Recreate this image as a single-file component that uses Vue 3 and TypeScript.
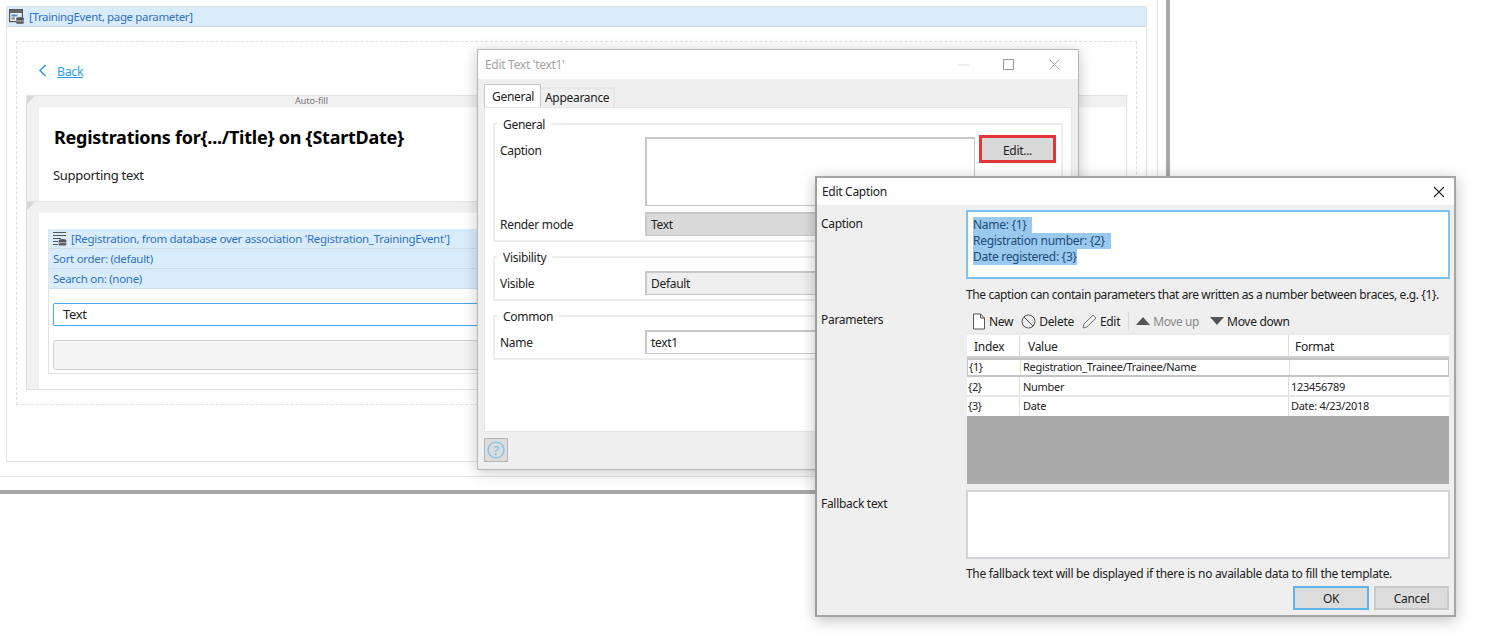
<script setup lang="ts">
interface Param { index: string; value: string; format: string }
const params: Param[] = [
  { index: '{1}', value: 'Registration_Trainee/Trainee/Name', format: '' },
  { index: '{2}', value: 'Number', format: '123456789' },
  { index: '{3}', value: 'Date', format: 'Date: 4/23/2018' },
]
</script>

<template>
  <div class="screen">
    <div class="page">
      <div class="stage">
        <div class="frame">
          <div class="bluebar top">
            <svg class="ic" width="15" height="15" viewBox="0 0 15 15">
              <rect x=".6" y=".6" width="12.8" height="12" fill="#e8eef3" stroke="#555" stroke-width="1.2" />
              <rect x="1" y="1" width="12" height="3" fill="#666" />
              <rect x="2.5" y="5.5" width="6" height="2" fill="#4a90d0" />
              <rect x="2.5" y="8.5" width="3.5" height="2" fill="#888" />
              <ellipse cx="11" cy="9.5" rx="3.8" ry="1.6" fill="#555" />
              <rect x="7.2" y="9.5" width="7.6" height="5.2" rx="1" fill="#555" />
              <path d="M7.2 12h7.6" stroke="#ddd" stroke-width=".8" />
            </svg>
            <span>[TrainingEvent, page parameter]</span>
          </div>
          <div class="dashed">
            <div class="backrow">
              <svg width="9" height="13" viewBox="0 0 9 13"><path d="M7.5 1 2 6.5 7.5 12" fill="none" stroke="#2196f3" stroke-width="1.5" /></svg>
              <a class="back">Back</a>
            </div>
            <div class="layout">
              <div class="strip"><span class="corner"></span><span class="autofill">Auto-fill</span></div>
              <div class="cell hero">
                <div class="title">Registrations for{.../Title} on {StartDate}</div>
                <div class="support">Supporting text</div>
              </div>
              <div class="strip mid"><span class="corner"></span></div>
              <div class="cell lower">
                <div class="listview">
                  <div class="bluebar row first">
                    <svg class="ic2" width="15" height="15" viewBox="0 0 15 15">
                      <path d="M1 1.5h13M1 4.5h13M1 7.5h8M1 10.5h5M1 13.5h5" stroke="#555" stroke-width="1.1" />
                      <ellipse cx="10.5" cy="9.5" rx="3.8" ry="1.5" fill="#555" />
                      <rect x="6.7" y="9.5" width="7.6" height="5" rx="1" fill="#555" />
                      <path d="M6.7 11.8h7.6" stroke="#ddd" stroke-width=".8" />
                    </svg>
                    <span>[Registration, from database over association 'Registration_TrainingEvent']</span>
                  </div>
                  <div class="bluebar row">Sort order: (default)</div>
                  <div class="bluebar row">Search on: (none)</div>
                  <div class="textbox">Text</div>
                  <div class="greybox"></div>
                </div>
              </div>
            </div>
          </div>
        </div>
      </div>
    </div>

    <section class="dlg one">
      <header class="d1-title">
        <span>Edit Text 'text1'</span>
        <svg class="min" width="12" height="2" viewBox="0 0 12 2"><path d="M0 1h12" stroke="#e0e0e0" /></svg>
        <svg class="max" width="11" height="11" viewBox="0 0 11 11"><rect x=".5" y=".5" width="10" height="10" fill="none" stroke="#999" /></svg>
        <svg class="cls" width="11" height="11" viewBox="0 0 11 11"><path d="M.5.5l10 10M10.5.5l-10 10" stroke="#aaa" fill="none" /></svg>
      </header>
      <div class="tabs">
        <span class="tab active">General</span>
        <span class="tab">Appearance</span>
      </div>
      <div class="panel">
        <div class="group g1">
          <span class="legend">General</span>
          <div class="frow">
            <label class="lbl caplbl">Caption</label>
            <div class="capwrap">
              <div class="field cap"></div>
              <button class="editbtn">Edit...</button>
            </div>
          </div>
          <div class="frow gap">
            <label class="lbl">Render mode</label>
            <div class="field sel dark">Text</div>
          </div>
        </div>
        <div class="group">
          <span class="legend">Visibility</span>
          <div class="frow">
            <label class="lbl">Visible</label>
            <div class="field sel">Default</div>
          </div>
        </div>
        <div class="group">
          <span class="legend">Common</span>
          <div class="frow">
            <label class="lbl">Name</label>
            <div class="field sel white">text1</div>
          </div>
        </div>
      </div>
      <div class="d1-foot">
        <button class="help">
          <svg width="20" height="20" viewBox="0 0 20 20">
            <circle cx="10" cy="10" r="8" fill="none" stroke="#6fbdf3" stroke-width="1.2" />
            <text x="10" y="14.5" text-anchor="middle" font-size="13" fill="#6fbdf3" font-family="Noto Sans, sans-serif">?</text>
          </svg>
        </button>
      </div>
    </section>

    <section class="dlg two">
      <header class="d2-title">
        <span>Edit Caption</span>
        <svg width="12" height="12" viewBox="0 0 12 12"><path d="M1 1l10 10M11 1 1 11" stroke="#222" fill="none" stroke-width="1.1" /></svg>
      </header>
      <div class="d2-body">
        <div class="d2row">
          <label class="lbl2 clabel">Caption</label>
          <div class="captext">
            <div class="line"><span class="hl tail">Name: {1}</span></div>
            <div class="line"><span class="hl tail">Registration number: {2}</span></div>
            <div class="line"><span class="hl">Date registered: {3}</span></div>
          </div>
        </div>
        <div class="d2row hint1">
          <span></span>
          <div class="hint tight">The caption can contain parameters that are written as a number between braces, e.g. {1}.</div>
        </div>
        <div class="d2row params">
          <label class="lbl2 plabel">Parameters</label>
          <div>
            <div class="toolbar">
              <span class="tool">
                <svg width="14" height="17" viewBox="0 0 14 17"><path d="M1.5 1h7l4 4v11h-11zM8.5 1v4h4" fill="#fff" stroke="#555" /></svg>New
              </span>
              <span class="tool">
                <svg width="15" height="15" viewBox="0 0 15 15"><circle cx="7.5" cy="7.5" r="6.5" fill="none" stroke="#555" /><path d="M3 3l9 9" stroke="#555" /></svg>Delete
              </span>
              <span class="tool">
                <svg width="15" height="15" viewBox="0 0 15 15"><path d="M1 14l1-4L11 1l3 3-9 9z" fill="none" stroke="#777" /></svg>Edit
              </span>
              <span class="sep"></span>
              <span class="tool off">
                <svg width="14" height="8" viewBox="0 0 14 8"><path d="M7 0l7 8H0z" fill="#555" /></svg>Move up
              </span>
              <span class="tool down">
                <svg width="14" height="8" viewBox="0 0 14 8"><path d="M0 0h14L7 8z" fill="#555" /></svg>Move down
              </span>
            </div>
            <div class="grid">
              <div class="tr head">
                <div class="td">Index</div>
                <div class="td">Value</div>
                <div class="td">Format</div>
              </div>
              <div v-for="(p, i) in params" :key="p.index" class="tr body" :class="{ picked: i === 0 }">
                <div class="td">{{ p.index }}</div>
                <div class="td">{{ p.value }}</div>
                <div class="td">{{ p.format }}</div>
              </div>
              <div class="empty"></div>
            </div>
          </div>
        </div>
        <div class="d2row fallback">
          <label class="lbl2 flabel">Fallback text</label>
          <div class="fallbox"></div>
        </div>
        <div class="d2row hint2">
          <span></span>
          <div class="hint">The fallback text will be displayed if there is no available data to fill the template.</div>
        </div>
        <div class="actions">
          <button class="btn ok">OK</button>
          <button class="btn">Cancel</button>
        </div>
      </div>
    </section>
  </div>
</template>

<style scoped>
.screen {
  position: relative;
  width: 1491px;
  height: 639px;
  overflow: hidden;
  background: #fff;
  font-family: "Noto Sans", "Open Sans", sans-serif;
  font-size: 12px;
  letter-spacing: -0.3px;
  color: #222;
}
.page {
  width: 1170px;
  height: 494px;
  box-sizing: border-box;
  border-right: 4px solid #a8a8a8;
  border-bottom: 4px solid #a8a8a8;
}
.stage {
  width: 1158px;
  height: 477px;
  box-sizing: border-box;
  border-right: 1px solid #e4e4e4;
  border-bottom: 1px solid #e4e4e4;
  padding: 6px 0 0 6px;
}
.frame {
  width: 1141px;
  height: 456px;
  box-sizing: border-box;
  border: 1px solid #e3e3e3;
  border-top: 0;
}
.bluebar {
  display: flex;
  align-items: center;
  background: #d9ecfb;
  color: #2f72c4;
  font-size: 11.5px;
  border-bottom: 1px solid #cfdbe5;
  box-sizing: border-box;
}
.top {
  height: 21px;
  padding-left: 2px;
  gap: 5px;
  border-top: 1px solid #dde5ea;
  letter-spacing: -0.36px;
}
.dashed {
  margin: 14px 9px 0;
  height: 364px;
  box-sizing: border-box;
  border: 1px dashed #dedede;
  padding: 0 9px;
}
.backrow {
  height: 53px;
  box-sizing: border-box;
  padding: 15px 0 0 12px;
  display: flex;
  align-items: flex-start;
  gap: 10px;
}
.backrow svg { margin-top: 7px; }
.back {
  color: #2b9cf5;
  text-decoration: underline;
  font-size: 12.3px;
  margin-top: 6px;
}
.layout {
  width: 1101px;
  height: 295px;
  box-sizing: border-box;
  border: 1px solid #e2e2e2;
  background: #f1f1f1;
}
.strip {
  position: relative;
  height: 11px;
  background: #f1f1f1;
  padding-left: 268px;
}
.strip.mid {
  border-top: 1px solid #e4e4e4;
}
.corner {
  position: absolute;
  left: 0;
  top: 0;
  border-top: 8px solid #d8d8d8;
  border-right: 8px solid transparent;
}
.autofill {
  display: block;
  font-size: 9px;
  line-height: 9px;
  color: #777;
  letter-spacing: 0;
}
.cell {
  margin-left: 12px;
  background: #fff;
}
.hero {
  height: 94px;
  box-sizing: border-box;
  padding: 18px 0 0 15px;
}
.title {
  font-size: 18px;
  font-weight: 700;
  line-height: 25px;
  color: #000;
  letter-spacing: -0.25px;
}
.support {
  margin-top: 16px;
  margin-left: -1px;
  font-size: 13px;
  line-height: 18px;
  color: #222;
}
.lower {
  height: 176px;
  box-sizing: border-box;
  padding: 16px 8px 0 9px;
}
.listview {
  height: 145px;
  box-sizing: border-box;
  border: 1px solid #e2e2e2;
  border-top: 0;
}
.row {
  height: 20px;
  padding-left: 3px;
}
.row:not(.first) { padding-left: 4px; }
.first { gap: 4px; }
.textbox {
  margin: 14px 4px 0;
  height: 23px;
  box-sizing: border-box;
  border: 1px solid #4aa8ec;
  box-shadow: 0 0 1px #7cc3f0;
  border-radius: 2px;
  padding-left: 9px;
  font-size: 13px;
  line-height: 21px;
  color: #222;
}
.greybox {
  margin: 14px 4px 0;
  height: 30px;
  box-sizing: border-box;
  border: 1px solid #d0d0d0;
  border-radius: 3px;
  background: #f4f4f4;
}

.dlg {
  position: absolute;
  box-sizing: border-box;
  background: #efefef;
}
.one {
  left: 477px;
  top: 49px;
  width: 602px;
  height: 421px;
  border: 1px solid #b8b8b8;
  box-shadow: 0 2px 14px rgba(0, 0, 0, 0.22);
}
.d1-title {
  position: relative;
  height: 29px;
  background: #fff;
  padding-left: 7px;
  line-height: 30px;
  color: #a4a4a4;
}
.d1-title svg { position: absolute; }
.min { left: 479px; top: 14px; }
.max { left: 525px; top: 9px; }
.cls { left: 571px; top: 9px; }
.tabs {
  display: flex;
  align-items: flex-end;
  height: 28px;
  padding-left: 6px;
}
.tab {
  height: 20px;
  box-sizing: border-box;
  padding: 0 4px;
  line-height: 18px;
  background: #f0f0f0;
  border: 2px solid #e6e6e6;
  border-bottom: 0;
  border-left: 0;
}
.tab.active {
  height: 23px;
  width: 57px;
  background: #fff;
  border: 1px solid #c9c9c9;
  border-bottom: 0;
  padding-left: 7px;
  line-height: 23px;
}
.panel {
  margin-left: 6px;
  width: 588px;
  height: 325px;
  box-sizing: border-box;
  background: #fff;
  border: 1px solid #e6e6e6;
  padding: 15px 8px 0;
}
.group {
  position: relative;
  border: 2px solid #ededed;
  padding: 13px 5px 4px 5px;
  margin-bottom: 14px;
}
.g1 { padding-top: 12px; }
.legend {
  position: absolute;
  left: 2px;
  top: -8px;
  padding: 0 6px;
  background: #fff;
  line-height: 16px;
}
.frow {
  display: grid;
  grid-template-columns: 145px 1fr;
}
.frow.gap { margin-top: 6px; }
.lbl {
  height: 24px;
  line-height: 26px;
}
.caplbl { line-height: 28px; }
.capwrap {
  display: flex;
  gap: 4px;
  align-items: flex-start;
}
.field {
  box-sizing: border-box;
  border: 1px solid #c8c8cc;
  border-top-width: 2px;
  border-left-width: 2px;
}
.cap {
  width: 330px;
  height: 69px;
  background: #fff;
}
.editbtn {
  width: 77px;
  height: 28px;
  margin-top: -2px;
  box-sizing: border-box;
  border: 3px solid #e1373a;
  background: #d9d9d9;
  font: inherit;
  letter-spacing: inherit;
  color: #222;
  padding: 2px 0 0;
}
.sel {
  height: 24px;
  line-height: 22px;
  padding-left: 4px;
  background: #efefef;
}
.sel.dark { background: #dadada; }
.sel.white { background: #fff; }
.d1-foot {
  padding: 6px 0 0 6px;
}
.help {
  display: block;
  width: 24px;
  height: 24px;
  padding: 0;
  box-sizing: border-box;
  background: #dcdcdc;
  border: 1px solid #b5b5b5;
}
.help svg { display: block; margin: 1px; }

.two {
  left: 815px;
  top: 176px;
  width: 641px;
  height: 441px;
  border: 2px solid #a6a6a6;
  border-left-color: #9d9d9d;
  box-shadow: 0 3px 14px rgba(0, 0, 0, 0.25);
}
.d2-title {
  display: flex;
  align-items: center;
  justify-content: space-between;
  height: 27px;
  background: #fff;
  padding: 0 9px 0 5px;
}
.d2-body {
  padding: 5px 4px 0;
}
.d2row {
  display: grid;
  grid-template-columns: 145px 1fr;
}
.lbl2 { line-height: 16px; }
.clabel { padding-top: 6px; }
.captext {
  height: 69px;
  box-sizing: border-box;
  border: 2px solid #7cc3f0;
  background: #fff;
  padding: 5px 5px;
  color: #1f4c78;
}
.line {
  height: 16px;
  line-height: 16px;
}
.hl {
  display: inline-block;
  background: #99c9ef;
}
.hl.tail { padding-right: 6px; }
.hint1 { margin-top: 8px; }
.hint {
  line-height: 16px;
  white-space: nowrap;
}
.hint.tight { letter-spacing: -0.4px; }
.params { margin-top: 5px; }
.plabel { padding-top: 4px; }
.toolbar {
  display: flex;
  align-items: center;
  box-sizing: border-box;
  height: 26px;
  padding: 1px 0 0 5px;
  gap: 8px;
  border-bottom: 1px solid #e6e6e6;
  margin: 0 0 0 1px;
}
.tool {
  display: flex;
  align-items: center;
  gap: 3px;
}
.tool.off {
  color: #8c8c8c;
  margin-left: -1px;
  letter-spacing: -0.4px;
}
.tool.down { margin-left: 3px; }
.sep {
  width: 1px;
  height: 18px;
  background: #d8d8d8;
}
.grid {
  margin: 1px 1px 0;
}
.tr {
  display: grid;
  grid-template-columns: 53px 269px 1fr;
  background: #fff;
  box-sizing: border-box;
}
.td {
  padding-left: 2px;
  border-right: 1px solid #dedede;
  white-space: nowrap;
  overflow: hidden;
}
.td:last-child { border-right: 0; }
.head {
  height: 23px;
  line-height: 24px;
  border-bottom: 2px solid #cfcfcf;
}
.head .td { padding-left: 7px; }
.head .td:nth-child(2) { padding-left: 8px; }
.head .td:last-child { padding-left: 6px; }
.body {
  height: 20px;
  font-size: 11px;
  line-height: 19px;
  border-bottom: 2px solid #e6e6e6;
}
.body .td:nth-child(2) { padding-left: 3px; }
.body .td:nth-child(1) { padding-left: 1px; }
.body.picked {
  height: 19px;
  border: 2px solid #c4c4c4;
  border-left-width: 1px;
  border-right-width: 1px;
  line-height: 14px;
}
.body.picked .td:nth-child(2) { padding-left: 2px; }
.body:nth-child(4) {
  height: 19px;
  line-height: 18px;
  border-bottom: 0;
}
.empty {
  height: 68px;
  background: #a9a9a9;
}
.fallback { margin-top: 6px; }
.flabel { padding-top: 6px; }
.fallbox {
  height: 69px;
  box-sizing: border-box;
  border: 2px solid #d2d2d8;
  background: #fff;
}
.hint2 { margin-top: 7px; }
.actions {
  display: flex;
  justify-content: flex-end;
  gap: 5px;
  margin: 4px 1px 0 0;
}
.btn {
  width: 75px;
  height: 24px;
  box-sizing: border-box;
  padding: 0;
  background: #dcdcdc;
  border: 2px solid #c9c9c9;
  font: inherit;
  letter-spacing: inherit;
  color: #222;
}
.btn.ok {
  width: 76px;
  border-color: #62b5ec;
}
</style>
